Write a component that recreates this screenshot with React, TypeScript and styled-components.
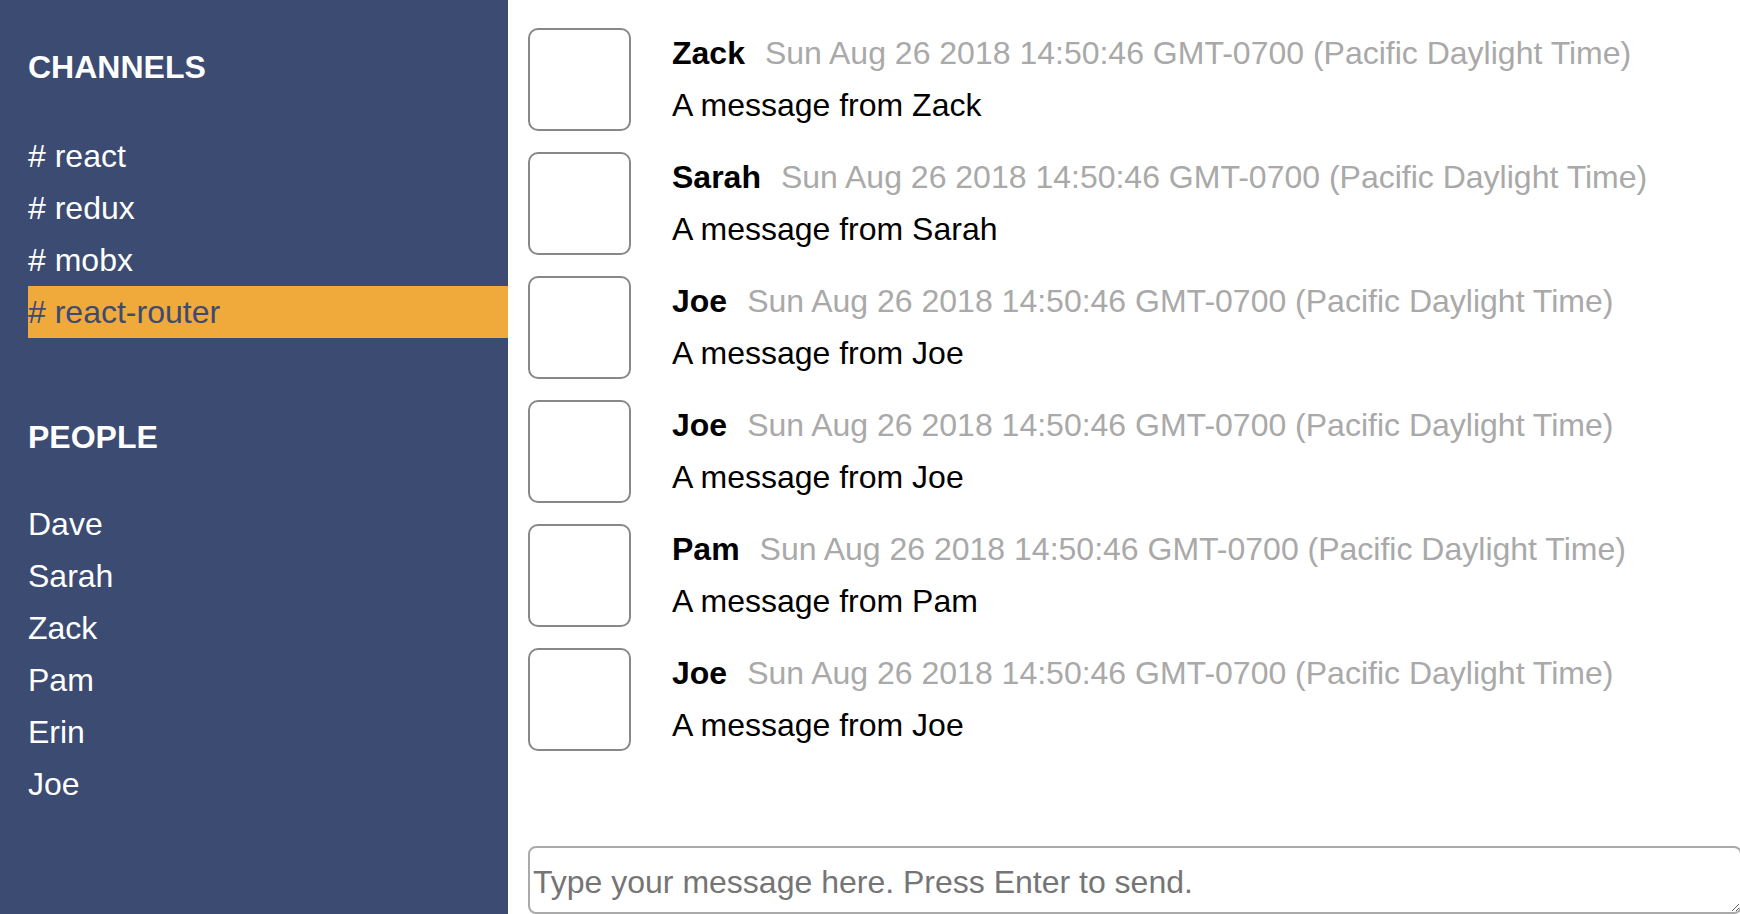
import React from "react";
import styled, { createGlobalStyle } from "styled-components";

const GlobalStyle = createGlobalStyle`
  html, body {
    margin: 0;
    padding: 0;
    overflow: hidden;
  }
  body {
    font-family: "Liberation Sans", Arial, Helvetica, sans-serif;
  }
  * {
    box-sizing: border-box;
  }
`;

const Layout = styled.div`
  display: flex;
  height: 100vh;
  width: 100vw;
`;

const Sidebar = styled.nav`
  width: 508px;
  flex-shrink: 0;
  background: #3c4b71;
  color: #ffffff;
  padding: 49px 0 0 28px;
  display: flex;
  flex-direction: column;
  gap: 81px;
`;

const Section = styled.section`
  display: flex;
  flex-direction: column;
`;

const Heading = styled.h2<{ $gap: number }>`
  margin: 0 0 ${(p) => p.$gap}px;
  font-size: 32px;
  font-weight: bold;
  line-height: 37px;
  color: #ffffff;
`;

const List = styled.ul`
  list-style: none;
  margin: 0;
  padding: 0;
`;

const Item = styled.li<{ $active?: boolean }>`
  height: 52px;
  font-size: 32px;
  line-height: 52px;
  white-space: nowrap;
  background: ${(p) => (p.$active ? "#f0a93b" : "transparent")};
  color: ${(p) => (p.$active ? "#3c4b71" : "#ffffff")};
`;

const Main = styled.main`
  flex: 1;
  min-width: 0;
  display: flex;
  flex-direction: column;
  background: #ffffff;
`;

const Messages = styled.div`
  flex: 1;
  padding: 27px 0 0 20px;
  display: flex;
  flex-direction: column;
  gap: 20px;
  overflow: hidden;
`;

const Row = styled.div`
  display: flex;
  align-items: flex-start;
  gap: 41px;
  height: 104px;
`;

const Avatar = styled.div`
  width: 103px;
  height: 103px;
  flex-shrink: 0;
  margin-top: 1px;
  border: 2px solid #888888;
  border-radius: 10px;
  background: #ffffff;
`;

const Body = styled.div`
  font-size: 32px;
  line-height: 52px;
  color: #000000;
  white-space: nowrap;
`;

const Header = styled.div`
  display: flex;
  align-items: baseline;
`;

const Name = styled.span`
  font-weight: bold;
`;

const Time = styled.span`
  margin-left: 20px;
  color: #a9a9a9;
`;

const Text = styled.div``;

const Composer = styled.textarea`
  display: block;
  flex-shrink: 0;
  margin-left: 20px;
  width: calc(100% - 18px);
  height: 68px;
  border: 2px solid #aaaaaa;
  border-radius: 8px;
  padding: 8px 3px 0;
  font-family: "Liberation Sans", Arial, Helvetica, sans-serif;
  font-size: 32px;
  line-height: 52px;
  color: #000;
  outline: none;
  overflow: hidden;
  &::placeholder {
    color: #757575;
  }
`;

const channels = ["react", "redux", "mobx", "react-router"];
const people = ["Dave", "Sarah", "Zack", "Pam", "Erin", "Joe"];
const stamp = "Sun Aug 26 2018 14:50:46 GMT-0700 (Pacific Daylight Time)";
const messages = ["Zack", "Sarah", "Joe", "Joe", "Pam", "Joe"];

export default function App() {
  return (
    <>
      <GlobalStyle />
      <Layout>
        <Sidebar>
          <Section>
            <Heading $gap={44}>CHANNELS</Heading>
            <List>
              {channels.map((c) => (
                <Item key={c} $active={c === "react-router"}>
                  # {c}
                </Item>
              ))}
            </List>
          </Section>
          <Section>
            <Heading $gap={42}>PEOPLE</Heading>
            <List>
              {people.map((p) => (
                <Item key={p}>{p}</Item>
              ))}
            </List>
          </Section>
        </Sidebar>
        <Main>
          <Messages>
            {messages.map((m, i) => (
              <Row key={i}>
                <Avatar />
                <Body>
                  <Header>
                    <Name>{m}</Name>
                    <Time>{stamp}</Time>
                  </Header>
                  <Text>A message from {m}</Text>
                </Body>
              </Row>
            ))}
          </Messages>
          <Composer placeholder="Type your message here. Press Enter to send." />
        </Main>
      </Layout>
    </>
  );
}
